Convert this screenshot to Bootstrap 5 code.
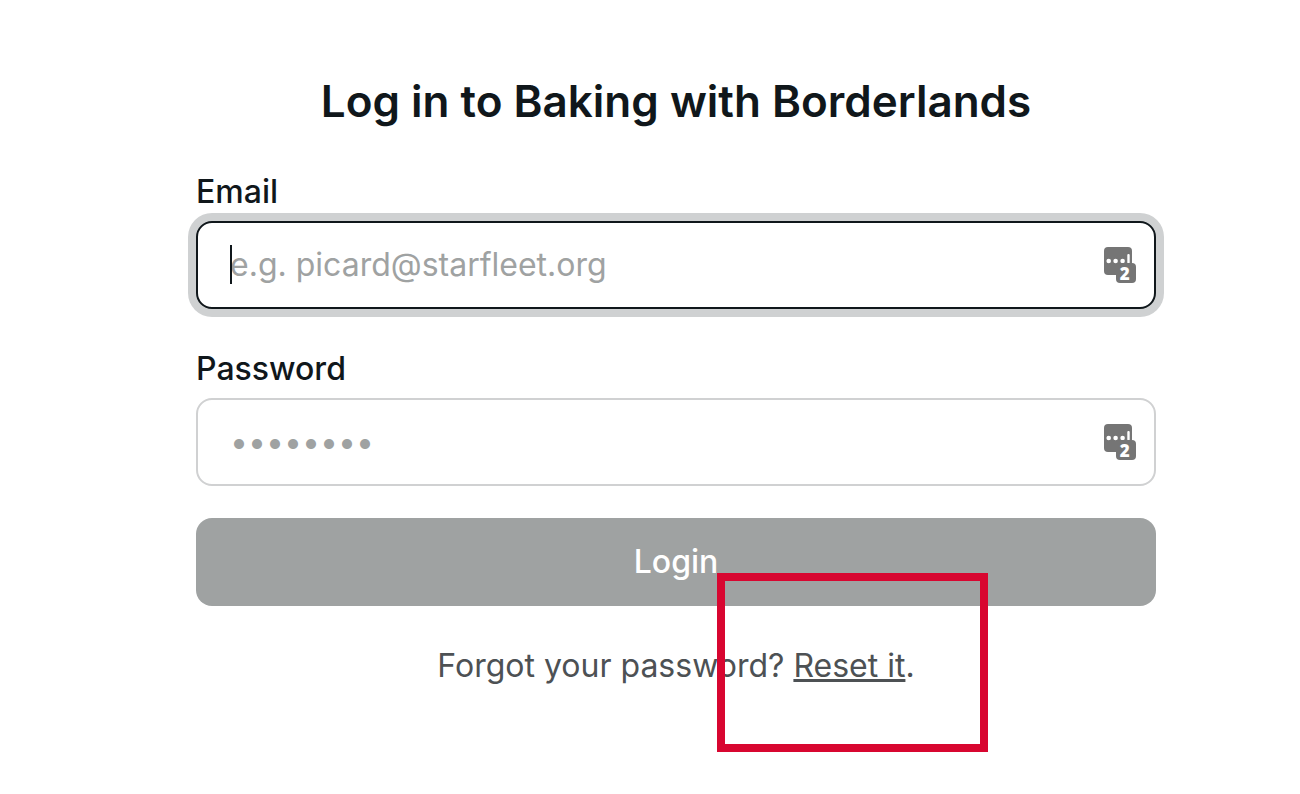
<!DOCTYPE html>
<html lang="en">
<head>
<meta charset="utf-8">
<meta name="viewport" content="width=device-width, initial-scale=1">
<title>Log in to Baking with Borderlands</title>
<link rel="stylesheet" href="https://cdn.jsdelivr.net/npm/bootstrap@5.3.0/dist/css/bootstrap.min.css">
<style>
body { font-family: Inter, sans-serif; font-size: 32px; line-height: 40px; color: #10171b; background: #fff; }
.login-shell { padding: 73px 136px 0 188px; }
.login-form { max-width: 976px; padding: 0 8px; }
.login-title { font-size: 44px; line-height: 56px; font-weight: 600; margin-bottom: 43px; }
.form-label { font-weight: 500; line-height: 40px; margin-bottom: 9px; }
.field { margin-bottom: 40px; }
.field-last { margin-bottom: 32px; }
.form-control { height: 88px; padding: 0 80px 2px 32px; font-size: 32px; line-height: 40px; border: 2px solid #d0d1d2; border-radius: 16px; color: #10171b; }
.form-control::placeholder { color: #9fa2a2; opacity: 1; }
.form-control.is-active, .form-control:focus { border-color: #10171b; box-shadow: 0 0 0 8px #cfd1d2; }
.caret { left: 34px; top: 24px; width: 2px; height: 39px; background: #10171b; }
.manager-icon { right: 20px; top: 26px; width: 32px; height: 36px; }
.manager-digit { font: 800 17px "Open Sans", sans-serif; }
.btn-login { height: 88px; font-size: 32px; font-weight: 500; border: 0; border-radius: 16px; background: #9fa2a2; color: #fff; }
.btn-login:hover { background: #8c9090; color: #fff; }
.reset-area { padding-bottom: 108px; }
.reset-line { margin-top: 40px; color: #4d5154; }
.reset-line a { color: inherit; text-decoration-thickness: 3px; }
.callout { left: 521px; top: 55px; width: 271px; height: 179px; border: 8px solid #d80630; pointer-events: none; }
</style>
</head>
<body>
<svg class="d-none" aria-hidden="true">
  <symbol id="manager" viewBox="0 0 32 36">
    <rect width="28" height="28" rx="4" fill="#757575"/>
    <g fill="#fff">
      <circle cx="4.7" cy="14" r="2.3"/>
      <circle cx="11.6" cy="14" r="2.3"/>
      <circle cx="18.6" cy="14" r="2.3"/>
      <rect x="23.3" y="7" width="2.4" height="9.5" rx="1"/>
    </g>
    <rect x="12" y="16" width="20" height="20" rx="4" fill="#757575"/>
    <text class="manager-digit" x="20.8" y="32.6" text-anchor="middle" fill="#fff">2</text>
  </symbol>
</svg>
<main class="login-shell">
<form class="login-form mx-auto">
  <h1 class="login-title text-center">Log in to Baking with Borderlands</h1>
  <div class="field">
    <label class="form-label d-block" for="email">Email</label>
    <div class="position-relative">
      <input class="form-control is-active" id="email" type="email" placeholder="e.g. picard@starfleet.org">
      <span class="caret position-absolute"></span>
      <svg class="manager-icon position-absolute" aria-hidden="true"><use href="#manager"/></svg>
    </div>
  </div>
  <div class="field field-last">
    <label class="form-label d-block" for="password">Password</label>
    <div class="position-relative">
      <input class="form-control" id="password" type="password" placeholder="••••••••">
      <svg class="manager-icon position-absolute" aria-hidden="true"><use href="#manager"/></svg>
    </div>
  </div>
  <div class="reset-area position-relative">
    <button class="btn btn-login w-100" type="button">Login</button>
    <p class="reset-line text-center mb-0">Forgot your password? <a href="#">Reset it</a>.</p>
    <div class="callout position-absolute"></div>
  </div>
</form>
</main>
<script src="https://cdn.jsdelivr.net/npm/bootstrap@5.3.0/dist/js/bootstrap.bundle.min.js"></script>
</body>
</html>
